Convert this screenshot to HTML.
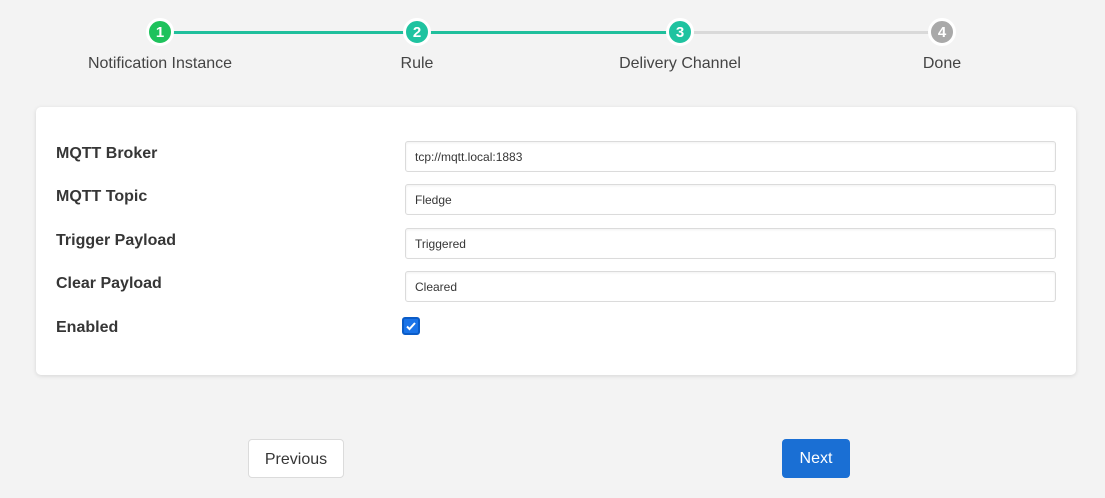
<!DOCTYPE html>
<html><head><style>
body{margin:0;width:1105px;height:498px;background:#f3f3f3;font-family:"Liberation Sans",sans-serif;position:relative;overflow:hidden}
.line{position:absolute;top:31px;height:3px}
.c{position:absolute;top:18px;width:22px;height:22px;border:3px solid #fff;border-radius:50%;color:#fff;font-weight:bold;font-size:15px;text-align:center;line-height:24px;margin-left:-14px}
.lab{position:absolute;top:55px;font-size:16px;color:#444;transform:translateX(-50%);white-space:nowrap}
.card{position:absolute;left:36px;top:107px;width:1040px;height:268px;background:#fff;border-radius:5px;box-shadow:0 1px 4px rgba(0,0,0,.12)}
.l{position:absolute;left:56px;font-size:16px;font-weight:bold;color:#363636}
.in{position:absolute;left:405px;width:640px;height:29px;border:1px solid #dbdbdb;border-radius:3px;font-size:12px;color:#363636;line-height:30px;padding-left:9px;box-shadow:inset 0 1px 2px rgba(0,0,0,.06)}
.btn{position:absolute;top:439px;height:39px;border-radius:4px;font-size:16px;line-height:40px;text-align:center;box-sizing:border-box}
</style></head><body>
<div class="line" style="left:160px;width:520px;background:#1fbf9c"></div>
<div class="line" style="left:680px;width:262px;background:#d9d9d9"></div>
<div class="c" style="left:160px;background:#1ec25c">1</div>
<div class="c" style="left:417px;background:#1fc3a0">2</div>
<div class="c" style="left:680px;background:#1fc3a0">3</div>
<div class="c" style="left:942px;background:#a9a9a9">4</div>
<div class="lab" style="left:160px">Notification Instance</div>
<div class="lab" style="left:417px">Rule</div>
<div class="lab" style="left:680px">Delivery Channel</div>
<div class="lab" style="left:942px">Done</div>
<div class="card"></div>
<div class="l" style="top:145px">MQTT Broker</div><div class="in" style="top:141px">tcp://mqtt.local:1883</div>
<div class="l" style="top:188px">MQTT Topic</div><div class="in" style="top:184px">Fledge</div>
<div class="l" style="top:232px">Trigger Payload</div><div class="in" style="top:228px">Triggered</div>
<div class="l" style="top:275px">Clear Payload</div><div class="in" style="top:271px">Cleared</div>
<div class="l" style="top:319px">Enabled</div>
<div style="position:absolute;left:402px;top:317px;width:14px;height:14px;border:2px solid #0b5cc7;border-radius:3px;background:#1a73e8">
<svg width="14" height="14" viewBox="0 0 14 14"><path d="M3 7.5l2.5 2.5L11 4" stroke="#fff" stroke-width="2" fill="none"/></svg></div>
<div class="btn" style="left:248px;width:96px;border:1px solid #dbdbdb;background:#fff;color:#363636">Previous</div>
<div class="btn" style="left:782px;width:68px;background:#1a6fd4;color:#fff">Next</div>
</body></html>
